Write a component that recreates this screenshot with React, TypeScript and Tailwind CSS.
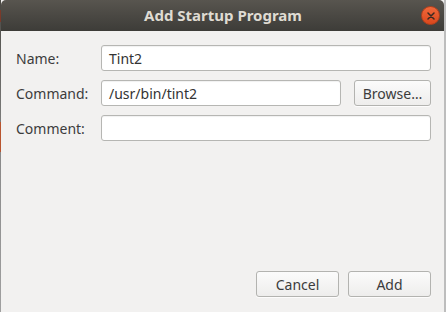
import React from "react";

const font = { fontFamily: '"Noto Sans", "Open Sans", sans-serif' };

function Field({ value, className }: { value?: string; className?: string }) {
  return (
    <div
      className={`h-[26px] rounded-[3px] border border-[#b6b6b3] bg-white px-[7px] flex items-center text-[14px] text-[#333333] shadow-[inset_0_1px_1px_rgba(0,0,0,0.06)] ${className ?? ""}`}
    >
      {value}
    </div>
  );
}

function Button({ label, className }: { label: string; className?: string }) {
  return (
    <div
      className={`h-[26px] rounded-[3px] border border-[#b3b3b0] bg-gradient-to-b from-[#fbfbfb] to-[#eeedec] flex items-center justify-center text-[14px] text-[#3c3c3c] shadow-[0_1px_0_rgba(255,255,255,0.8)] ${className ?? ""}`}
    >
      {label}
    </div>
  );
}

export default function App() {
  return (
    <div className="w-[446px] h-[312px] flex bg-[#9c9c9c] overflow-hidden" style={font}>
      <div className="w-[1px] h-full bg-gradient-to-b from-[#4a4944] via-[#8a8a8a] to-[#a0a0a0] flex flex-col">
        <div className="h-[10px]" />
        <div className="h-[12px] bg-[#7a3a2a]" />
        <div className="h-[100px]" />
        <div className="h-[30px] bg-[#b9552f]" />
      </div>
      <div className="w-[443px] h-full flex flex-col bg-[#f2f1f0]">
        <div className="h-[31px] rounded-t-[5px] bg-gradient-to-b from-[#58554f] to-[#3d3c38] flex items-center relative">
          <div className="flex-1 text-center text-[15px] font-bold text-[#dfdbd2] pl-[1px]">
            Add Startup Program
          </div>
          <div className="absolute right-[4px] top-[6px] w-[19px] h-[19px] rounded-full bg-gradient-to-b from-[#f0683a] to-[#d9471c] border border-[#b5401c] flex items-center justify-center">
            <svg width="8" height="8" viewBox="0 0 8 8">
              <path d="M1 1L7 7M7 1L1 7" stroke="#3a2a22" strokeWidth="1.5" strokeLinecap="round" />
            </svg>
          </div>
        </div>
        <div className="flex-1 flex flex-col pl-[15px] pr-[13px] pt-[14px] pb-[15px]">
          <div className="grid grid-cols-[85px_1fr] gap-y-[9px] items-center text-[14px] text-[#3c3c3c]">
            <div>Name:</div>
            <Field value="Tint2" />
            <div>Command:</div>
            <div className="flex gap-[13px]">
              <Field value="/usr/bin/tint2" className="flex-1" />
              <Button label="Browse…" className="w-[77px]" />
            </div>
            <div>Comment:</div>
            <Field />
          </div>
          <div className="flex-1" />
          <div className="flex justify-end gap-[9px]">
            <Button label="Cancel" className="w-[83px]" />
            <Button label="Add" className="w-[83px]" />
          </div>
        </div>
      </div>
      <div className="w-[2px] h-full bg-[#bdbdbd]" />
    </div>
  );
}
